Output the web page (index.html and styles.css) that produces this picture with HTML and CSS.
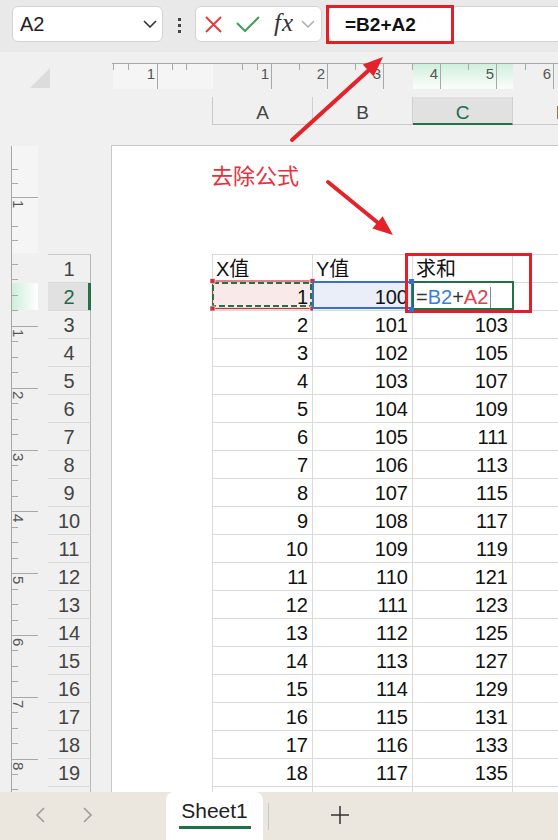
FILE: index.html
```html
<!DOCTYPE html>
<html lang="zh">
<head>
<meta charset="utf-8">
<title>Excel</title>
<link rel="stylesheet" href="styles.css">
</head>
<body>
<header class="topbar">
  <div class="namebox"><span>A2</span>
    <svg class="chev" width="14" height="8" viewBox="0 0 14 8"><polyline points="1,1 7,7 13,1" fill="none" stroke="#333" stroke-width="1.6"/></svg>
  </div>
  <div class="dots"><i></i><i></i><i></i></div>
  <div class="fxbox">
    <svg class="ico-x" width="17" height="17" viewBox="0 0 17 17"><path d="M1 1 L16 16 M16 1 L1 16" stroke="#e5383b" stroke-width="1.8" fill="none"/></svg>
    <svg class="ico-ok" width="24" height="16" viewBox="0 0 24 16"><polyline points="1,7 9,15 23,1" fill="none" stroke="#3ea055" stroke-width="2"/></svg>
    <span class="fx">fx</span>
    <svg class="chev2" width="14" height="8" viewBox="0 0 14 8"><polyline points="1,1 7,7 13,1" fill="none" stroke="#b0b0b0" stroke-width="1.6"/></svg>
  </div>
  <div class="formula">=B2+A2</div>
</header>

<section class="top">
  <div class="corner"><div class="tri"></div></div>
  <div class="topright">
    <svg class="hruler" width="446" height="27" viewBox="0 0 446 27">
      <defs>
        <linearGradient id="gh" x1="0" y1="0" x2="0" y2="1">
          <stop offset="0" stop-color="#cfeedb"/>
          <stop offset="1" stop-color="#fbfefc"/>
        </linearGradient>
      </defs>
      <rect x="1" y="1" width="100" height="26" fill="#f5f5f5"/>
      <rect x="301" y="1" width="100" height="26" fill="url(#gh)"/>
      <path d="M0 1.5 H446" stroke="#a8a8a8" stroke-width="1"/>
      <path d="M1.5 1 V8 M16.5 1 V8 M60.5 1 V8 M74.5 1 V8 M130.5 1 V8 M145.5 1 V8 M187.5 1 V8 M243.5 1 V8 M300.5 1 V8 M356.5 1 V8 M413.5 1 V8" stroke="#a8a8a8" stroke-width="1"/>
      <path d="M45.5 1 V27 M159.5 1 V27 M215.5 1 V27 M271.5 1 V27 M328.5 1 V27 M384.5 1 V27 M441.5 1 V27" stroke="#a8a8a8" stroke-width="1"/>
      <g class="rnum" text-anchor="end">
        <text x="43" y="17">1</text>
        <text x="157" y="17">1</text>
        <text x="213" y="17">2</text>
        <text x="269" y="17">3</text>
        <text x="326" y="17">4</text>
        <text x="382" y="17">5</text>
        <text x="439" y="17">6</text>
      </g>
    </svg>
    <div class="colheads">
      <div class="ch">A</div>
      <div class="ch">B</div>
      <div class="ch sel">C</div>
      <div class="ch">D</div>
    </div>
  </div>
</section>

<section class="body">
  <svg class="vruler" width="40" height="647" viewBox="0 0 40 647">
    <defs>
      <linearGradient id="gv" x1="0" y1="0" x2="1" y2="0">
        <stop offset="0" stop-color="#cfeedb"/>
        <stop offset="1" stop-color="#ffffff"/>
      </linearGradient>
    </defs>
    <rect x="12" y="1" width="26" height="107" fill="#f5f5f5"/>
    <rect x="12" y="138" width="26" height="27" fill="url(#gv)"/>
    <path d="M11.5 1 V647" stroke="#a8a8a8" stroke-width="1"/>
    <path d="M11 24.5 H18 M11 38.5 H18 M11 81.5 H18 M11 95.5 H18 M11 119.5 H18 M11 134.5 H18 M11 150.5 H18 M11 165.5 H18 M11 196.5 H18 M11 212.5 H18 M11 227.5 H18 M11 258.5 H18 M11 274.5 H18 M11 289.5 H18 M11 320.5 H18 M11 335.5 H18 M11 351.5 H18 M11 382.5 H18 M11 397.5 H18 M11 413.5 H18 M11 444.5 H18 M11 459.5 H18 M11 475.5 H18 M11 505.5 H18 M11 521.5 H18 M11 536.5 H18 M11 567.5 H18 M11 583.5 H18 M11 598.5 H18 M11 629.5 H18 M11 644.5 H18" stroke="#a8a8a8" stroke-width="1"/>
    <path d="M11 52.5 H38 M11 181.5 H38 M11 243.5 H38 M11 305.5 H38 M11 366.5 H38 M11 428.5 H38 M11 490.5 H38 M11 552.5 H38 M11 614.5 H38" stroke="#a8a8a8" stroke-width="1"/>
    <g class="rnum">
      <text transform="translate(13 55) rotate(90)">1</text>
      <text transform="translate(13 184) rotate(90)">1</text>
      <text transform="translate(13 246) rotate(90)">2</text>
      <text transform="translate(13 308) rotate(90)">3</text>
      <text transform="translate(13 369) rotate(90)">4</text>
      <text transform="translate(13 431) rotate(90)">5</text>
      <text transform="translate(13 493) rotate(90)">6</text>
      <text transform="translate(13 555) rotate(90)">7</text>
      <text transform="translate(13 617) rotate(90)">8</text>
    </g>
  </svg>

  <div class="rowheads">
    <div class="rh">1</div><div class="rh sel">2</div><div class="rh">3</div><div class="rh">4</div><div class="rh">5</div>
    <div class="rh">6</div><div class="rh">7</div><div class="rh">8</div><div class="rh">9</div><div class="rh">10</div>
    <div class="rh">11</div><div class="rh">12</div><div class="rh">13</div><div class="rh">14</div><div class="rh">15</div>
    <div class="rh">16</div><div class="rh">17</div><div class="rh">18</div><div class="rh">19</div><div class="rh"></div>
  </div>

  <div class="page">
    <div class="grid">
      <div class="c">X值</div><div class="c">Y值</div><div class="c">求和</div><div class="c"></div>

      <div class="c num copy">1
        <svg class="ants" width="108" height="36" viewBox="0 0 108 36">
          <rect x="3.5" y="3" width="100" height="27.5" fill="none" stroke="#c8323a" stroke-width="1.2"/>
          <rect x="4" y="5" width="98" height="23" fill="none" stroke="#217346" stroke-width="2" stroke-dasharray="6 3"/>
          <rect x="1" y="0.5" width="5" height="5" fill="#c8323a" stroke="#fff" stroke-width="0.6"/>
          <rect x="101" y="0.5" width="5" height="5" fill="#c8323a" stroke="#fff" stroke-width="0.6"/>
          <rect x="1" y="28" width="5" height="5" fill="#c8323a" stroke="#fff" stroke-width="0.6"/>
          <rect x="101" y="28" width="5" height="5" fill="#c8323a" stroke="#fff" stroke-width="0.6"/>
        </svg>
      </div>
      <div class="c num refb">100<span class="bbox"></span><i class="hnd h1"></i><i class="hnd h2"></i></div>
      <div class="c edit"><span class="eq">=</span><span class="rb">B2</span><span class="eq">+</span><span class="ra">A2</span><span class="caret"></span><span class="gbox"></span></div>
      <div class="c"></div>

      <div class="c num">2</div><div class="c num">101</div><div class="c num">103</div><div class="c"></div>
      <div class="c num">3</div><div class="c num">102</div><div class="c num">105</div><div class="c"></div>
      <div class="c num">4</div><div class="c num">103</div><div class="c num">107</div><div class="c"></div>
      <div class="c num">5</div><div class="c num">104</div><div class="c num">109</div><div class="c"></div>
      <div class="c num">6</div><div class="c num">105</div><div class="c num">111</div><div class="c"></div>
      <div class="c num">7</div><div class="c num">106</div><div class="c num">113</div><div class="c"></div>
      <div class="c num">8</div><div class="c num">107</div><div class="c num">115</div><div class="c"></div>
      <div class="c num">9</div><div class="c num">108</div><div class="c num">117</div><div class="c"></div>
      <div class="c num">10</div><div class="c num">109</div><div class="c num">119</div><div class="c"></div>
      <div class="c num">11</div><div class="c num">110</div><div class="c num">121</div><div class="c"></div>
      <div class="c num">12</div><div class="c num">111</div><div class="c num">123</div><div class="c"></div>
      <div class="c num">13</div><div class="c num">112</div><div class="c num">125</div><div class="c"></div>
      <div class="c num">14</div><div class="c num">113</div><div class="c num">127</div><div class="c"></div>
      <div class="c num">15</div><div class="c num">114</div><div class="c num">129</div><div class="c"></div>
      <div class="c num">16</div><div class="c num">115</div><div class="c num">131</div><div class="c"></div>
      <div class="c num">17</div><div class="c num">116</div><div class="c num">133</div><div class="c"></div>
      <div class="c num">18</div><div class="c num">117</div><div class="c num">135</div><div class="c"></div>
      <div class="c"></div><div class="c"></div><div class="c"></div><div class="c"></div>
    </div>
  </div>
</section>

<footer class="tabs">
  <svg class="nav prev" width="10" height="16" viewBox="0 0 10 16"><polyline points="9,1 2,8 9,15" fill="none" stroke="#9c9c9c" stroke-width="1.6"/></svg>
  <svg class="nav next" width="10" height="16" viewBox="0 0 10 16"><polyline points="1,1 8,8 1,15" fill="none" stroke="#9c9c9c" stroke-width="1.6"/></svg>
  <div class="tab"><span class="tabname">Sheet1</span><span class="tabline"></span></div>
  <span class="sep"></span>
  <svg class="plus" width="18" height="18" viewBox="0 0 18 18"><path d="M9 0 V18 M0 9 H18" stroke="#333" stroke-width="1.5"/></svg>
</footer>

<div class="annot">
  <svg class="arrows" width="558" height="840" viewBox="0 0 558 840">
    <g stroke="#e42229" stroke-width="4" stroke-linecap="round" fill="#e42229">
      <line x1="292" y1="140" x2="369" y2="70"/>
      <line x1="328" y1="182" x2="377" y2="222"/>
    </g>
    <g fill="#e42229">
      <polygon points="383,57 373.6,76.4 362.8,64.6"/>
      <polygon points="393,235 372.4,228.6 382.6,216.2"/>
    </g>
  </svg>
  <div class="note">去除公式</div>
  <div class="redbox rb-top"></div>
  <div class="redbox rb-cell"></div>
</div>
</body>
</html>
```
FILE: styles.css
```css
* { box-sizing: border-box; }
html, body { margin: 0; padding: 0; }
body {
  width: 558px;
  height: 840px;
  overflow: hidden;
  position: relative;
  background: #f0f0f0;
  font-family: "Liberation Sans", "Noto Sans CJK SC", sans-serif;
  color: #111;
}

/* ---------- formula bar ---------- */
.topbar {
  height: 52px;
  background: #e9e9ea;
  display: flex;
  align-items: flex-start;
  padding-top: 6px;
}
.namebox {
  margin-left: 12px;
  width: 151px;
  height: 36px;
  background: #fff;
  border: 1px solid #d4d4d4;
  border-radius: 6px;
  display: flex;
  align-items: center;
  justify-content: space-between;
  padding: 0 5px 0 7px;
  font-size: 20px;
  color: #222;
}
.chev { display: block; }
.dots {
  width: 32px;
  display: flex;
  flex-direction: column;
  align-items: center;
  gap: 3px;
  padding-top: 12px;
}
.dots i { display: block; width: 3px; height: 3px; background: #444; }
.fxbox {
  width: 127px;
  height: 36px;
  background: #fff;
  border: 1px solid #d4d4d4;
  border-radius: 6px;
  display: flex;
  align-items: center;
}
.ico-x { margin-left: 9px; display: block; }
.ico-ok { margin-left: 14px; display: block; }
.fx {
  margin-left: 14px;
  font-family: "Liberation Serif", serif;
  font-style: italic;
  font-size: 25px;
  line-height: 1;
  color: #333;
  letter-spacing: 1px;
  margin-top: -3px;
}
.chev2 { margin-left: 7px; display: block; }
.formula {
  flex: 1;
  margin-left: 6px;
  height: 36px;
  background: #fff;
  border: 1px solid #d4d4d4;
  border-right: none;
  border-radius: 6px 0 0 6px;
  padding-left: 16px;
  font-size: 19px;
  font-weight: bold;
  line-height: 36px;
  color: #111;
}

/* ---------- ruler + column headers ---------- */
.top { height: 93px; display: flex; }
.corner { width: 112px; flex: none; }
.tri {
  margin: 16px 0 0 30px;
  width: 20px;
  height: 20px;
  background: #dcdcdc;
  clip-path: polygon(100% 0, 100% 100%, 0 100%);
}
.topright { flex: 1; overflow: hidden; }
.hruler { display: block; margin-top: 10px; }
.rnum { font-family: "Liberation Sans", sans-serif; font-size: 15px; fill: #555; }
.colheads {
  margin: 8px 0 0 100px;
  display: flex;
  width: max-content;
  border-left: 1px solid #c8c8c8;
}
.ch {
  width: 100px;
  height: 28px;
  border-right: 1px solid #d0d0d0;
  border-bottom: 1px solid #c8c8c8;
  text-align: center;
  font-size: 19px;
  line-height: 23px;
  padding-top: 4px;
  color: #444;
}
.ch.sel {
  background: #e1e1e1;
  color: #1e6b47;
  border-bottom: 2px solid #217346;
}

/* ---------- sheet body ---------- */
.body { display: flex; height: 647px; overflow: hidden; }
.vruler { flex: none; display: block; }
.rowheads {
  flex: none;
  width: 43px;
  margin: 109px 0 0 8px;
  border-top: 1px solid #c8c8c8;
}
.rh {
  height: 28px;
  border-bottom: 1px solid #d9d9d9;
  border-right: 1px solid #b8b8b8;
  text-align: center;
  font-size: 20px;
  line-height: 26px;
  padding-top: 1px;
  color: #444;
}
.rh.sel {
  background: #e1e1e1;
  color: #1e6b47;
  border-right-color: #217346;
  box-shadow: inset -2px 0 0 #217346;
}
.page {
  flex: 1;
  margin-left: 20px;
  background: #fff;
  border-top: 1px solid #c8c8c8;
  border-left: 1px solid #c8c8c8;
  overflow: hidden;
}
.grid {
  margin: 108px 0 0 100px;
  display: grid;
  grid-template-columns: repeat(4, 100px);
  width: 401px;
  border-left: 1px solid #dadada;
  border-top: 1px solid #dadada;
}
.c {
  position: relative;
  height: 28px;
  border-right: 1px solid #dadada;
  border-bottom: 1px solid #dadada;
  font-size: 20px;
  line-height: 26px;
  padding: 1px 4px 0 3px;
  white-space: nowrap;
  color: #111;
}
.num { text-align: right; }

.copy { background: #f9e9e9; }
.ants { position: absolute; left: -4px; top: -5px; overflow: visible; }

.refb { background: #e9eef8; overflow: visible; }
.bbox {
  position: absolute;
  left: -1px;
  top: -2px;
  width: 101px;
  height: 28px;
  border: 2px solid #3b6fc4;
}
.hnd {
  position: absolute;
  left: 96px;
  width: 5px;
  height: 5px;
  background: #3b6fc4;
  z-index: 3;
}
.h1 { top: -4px; }
.h2 { top: 24px; }

.edit { padding-left: 3px; }
.eq { color: #333; }
.rb { color: #3b7dd8; }
.ra { color: #d8414e; }
.caret {
  display: inline-block;
  width: 1px;
  height: 22px;
  background: #888;
  vertical-align: -5px;
  margin-left: 2px;
}
.gbox {
  position: absolute;
  left: -1px;
  top: -2px;
  width: 102px;
  height: 29px;
  border: 2px solid #217346;
  z-index: 2;
}

/* ---------- sheet tabs ---------- */
.tabs {
  height: 48px;
  background: #ebe7df;
  display: flex;
  align-items: flex-start;
}
.nav { display: block; margin-top: 15px; }
.prev { margin-left: 35px; }
.next { margin-left: 38px; }
.tab {
  margin-left: 73px;
  width: 97px;
  height: 48px;
  background: #fff;
  border-radius: 8px 8px 0 0;
  display: flex;
  flex-direction: column;
  align-items: center;
  padding-top: 7px;
}
.tabname { font-size: 21px; line-height: 24px; color: #222; }
.tabline { display: block; width: 72px; height: 3px; background: #1e7145; margin-top: 3px; }
.sep { display: block; width: 1px; height: 27px; background: #c8c8c8; margin: 11px 0 0 5px; }
.plus { display: block; margin: 14px 0 0 62px; }

/* ---------- annotations (drawn over the screenshot) ---------- */
.annot { position: absolute; left: 0; top: 0; width: 558px; height: 840px; pointer-events: none; }
.arrows { position: absolute; left: 0; top: 0; }
.note {
  position: absolute;
  left: 211px;
  top: 163px;
  font-family: "Noto Sans CJK SC", sans-serif;
  font-size: 22px;
  line-height: 22px;
  color: #e8303a;
}
.redbox { position: absolute; border: 3px solid #e41e26; }
.rb-top { left: 326px; top: 5px; width: 128px; height: 39px; }
.rb-cell { left: 405px; top: 253px; width: 127px; height: 60px; }
```
